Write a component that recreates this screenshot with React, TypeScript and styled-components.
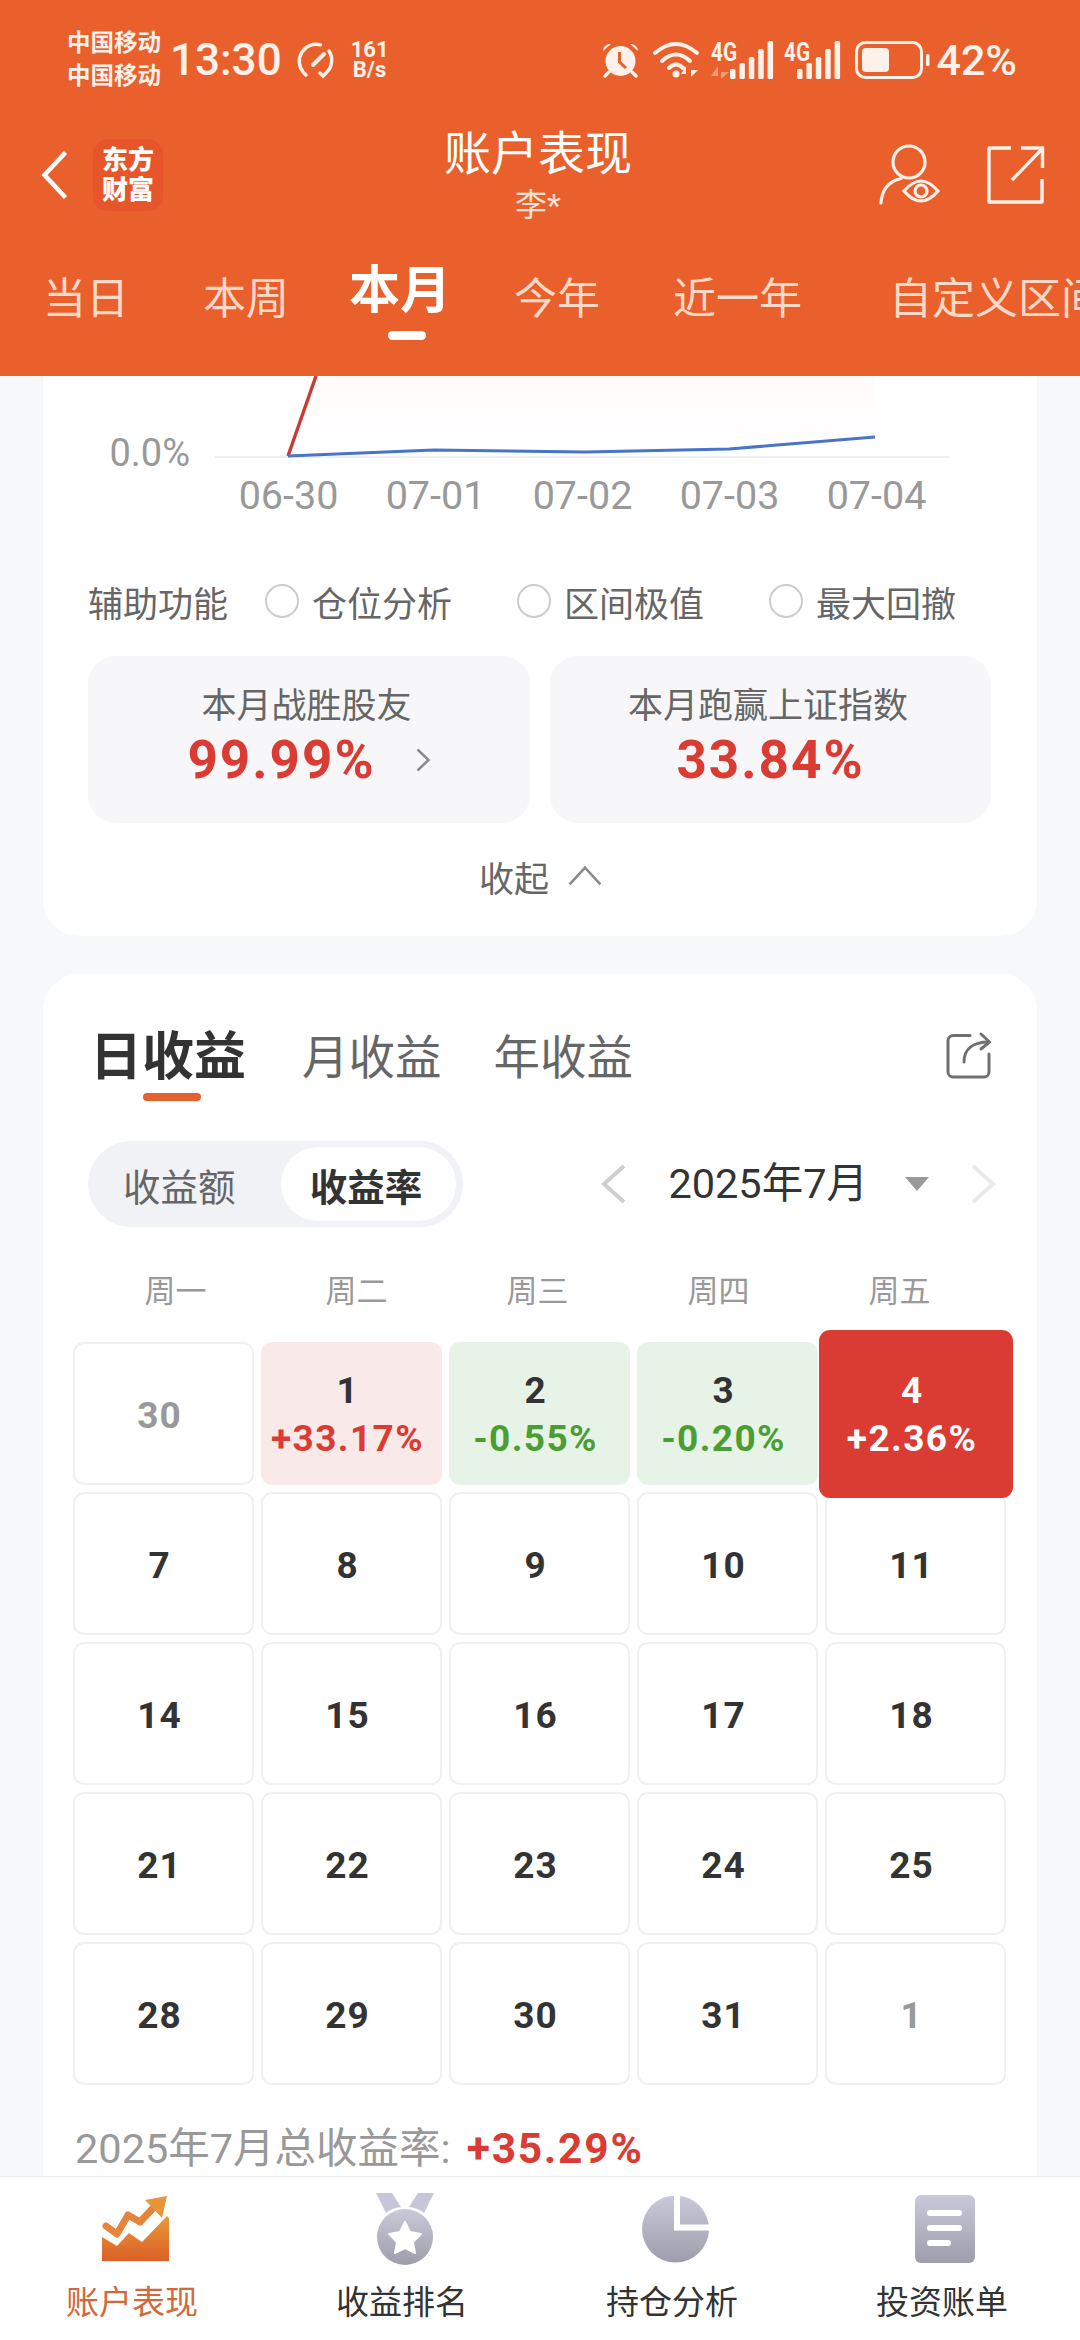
import React from "react";
import styled, { createGlobalStyle } from "styled-components";

const FONT = `Roboto, "Noto Sans CJK SC", "Noto Sans", sans-serif`;
const ORANGE = "#EA602C";
const RED = "#DA3B33";
const GREEN = "#4A9E34";

const Global = createGlobalStyle`
  html, body { margin: 0; padding: 0; background: #F7F8FA; }
  * { box-sizing: border-box; }
  body { font-family: ${FONT}; }
`;

const Screen = styled.div`
  width: 1080px;
  height: 2340px;
  display: flex;
  flex-direction: column;
  overflow: hidden;
  background: #f7f8fa;
`;

const Header = styled.header`
  height: 376px;
  flex: none;
  background: ${ORANGE};
  color: #fff;
`;

const StatusBar = styled.div`
  height: 120px;
  display: flex;
  align-items: center;
  padding: 0 63px 0 67px;
  color: #fdf1ea;
`;

const Carriers = styled.div`
  font-size: 23.5px;
  font-weight: 700;
  line-height: 33px;
  width: 94px;
  white-space: nowrap;
`;

const Clock = styled.div`
  margin: 0 14px 0 9px;
  font-size: 44px;
  font-weight: 500;
  line-height: 50px;
`;

const Speed = styled.div`
  margin-left: 17px;
  font-size: 22px;
  font-weight: 700;
  line-height: 20px;
  text-align: center;
`;

const StatusRight = styled.div`
  margin-left: auto;
  display: flex;
  align-items: center;
  gap: 11px;
`;

const AlarmSlot = styled.div`
  margin-right: 3px;
  display: flex;
`;

const BatterySlot = styled.div`
  margin-left: 4px;
  display: flex;
`;

const Percent = styled.div`
  font-size: 43px;
  font-weight: 500;
  line-height: 50px;
  margin-left: -5px;
`;

const Nav = styled.div`
  height: 110px;
  display: grid;
  grid-template-columns: 1fr auto 1fr;
`;

const NavLeft = styled.div`
  display: flex;
  align-items: center;
  gap: 23px;
  padding-left: 40px;
`;

const Logo = styled.div`
  width: 70px;
  height: 72px;
  border-radius: 15px;
  background: #e7552b;
  display: flex;
  flex-direction: column;
  align-items: center;
  justify-content: center;
  font-size: 26px;
  font-weight: 900;
  line-height: 30px;
`;

const TitleBlock = styled.div`
  display: flex;
  flex-direction: column;
  align-items: center;
  padding: 9px 4px 0 0;
`;

const Title = styled.div`
  font-size: 47px;
  line-height: 50px;
  font-weight: 400;
`;

const SubTitle = styled.div`
  margin-top: 9px;
  font-size: 32px;
  line-height: 34px;
  color: #fde4d8;
`;

const NavRight = styled.div`
  display: flex;
  align-items: center;
  justify-content: flex-end;
  gap: 47px;
  padding-right: 36px;
`;

const PeriodTabs = styled.div`
  display: flex;
  align-items: flex-start;
  height: 146px;
  padding-top: 39px;
  white-space: nowrap;
  overflow: hidden;
`;

const PeriodTab = styled.div<{ $left: number; $active?: boolean }>`
  position: relative;
  flex: none;
  margin-left: ${(p) => p.$left}px;
  margin-top: ${(p) => (p.$active ? -8 : 0)}px;
  font-size: ${(p) => (p.$active ? 51 : 43)}px;
  line-height: 60px;
  font-weight: ${(p) => (p.$active ? 700 : 400)};
  color: ${(p) => (p.$active ? "#fff" : "#fcd9c7")};
  ${(p) =>
    p.$active &&
    `&::after {
      content: "";
      position: absolute;
      left: 39px;
      top: 70px;
      width: 38px;
      height: 9px;
      border-radius: 5px;
      background: #fff;
    }`}
`;

const Main = styled.main`
  flex: 1;
  min-height: 0;
  overflow: hidden;
  padding: 0 43px;
`;

const Card = styled.section`
  background: #fff;
  border-radius: 0 0 36px 36px;
  padding: 0 45px 40px;
`;

const PlotRow = styled.div`
  display: flex;
  align-items: flex-end;
  height: 82px;
`;

const YLabel = styled.div`
  width: 127px;
  flex: none;
  text-align: right;
  padding-right: 25px;
  font-size: 38px;
  line-height: 44px;
  color: #999;
  margin-bottom: -17px;
`;

const XAxis = styled.div`
  display: grid;
  grid-template-columns: repeat(5, 147px);
  margin: 16px 0 0 127px;
`;

const XLabel = styled.div`
  text-align: center;
  font-size: 39.5px;
  line-height: 44px;
  color: #999;
  white-space: nowrap;
`;

const AuxRow = styled.div`
  margin-top: 61px;
  display: flex;
  align-items: center;
  height: 44px;
  font-size: 35px;
  color: #666;
`;

const AuxTitle = styled.div`
  width: 177px;
  flex: none;
`;

const AuxOption = styled.div`
  display: flex;
  align-items: center;
  gap: 13px;
  width: 252px;
  flex: none;
`;

const Radio = styled.span`
  width: 34px;
  height: 34px;
  border-radius: 50%;
  border: 2.5px solid #ccc;
  flex: none;
`;

const Stats = styled.div`
  margin-top: 33px;
  display: grid;
  grid-template-columns: 442px 441px;
  gap: 20px;
`;

const StatBox = styled.div`
  height: 167px;
  border-radius: 28px;
  background: #f7f7fa;
  padding-top: 28px;
  display: flex;
  flex-direction: column;
  align-items: center;
`;

const StatLabel = styled.div`
  font-size: 35px;
  line-height: 46px;
  color: #666;
  padding-right: 5px;
`;

const StatValueRow = styled.div`
  display: flex;
  align-items: center;
  gap: 39px;
`;

const StatValue = styled.div`
  font-size: 53px;
  line-height: 60px;
  font-weight: 700;
  letter-spacing: 2px;
  color: ${RED};
`;

const Collapse = styled.div`
  margin-top: 33px;
  height: 40px;
  display: flex;
  align-items: center;
  justify-content: center;
  gap: 18px;
  padding-left: 2px;
  font-size: 35px;
  color: #666;
`;

const EarningsCard = styled.section`
  margin-top: 38px;
  background: #fff;
  border-radius: 36px 36px 0 0;
  padding: 54px 0 60px;
`;

const EarnTabs = styled.div`
  display: flex;
  align-items: center;
  height: 60px;
  padding: 0 46px 0 47px;
`;

const EarnTab = styled.div<{ $active?: boolean }>`
  position: relative;
  font-size: ${(p) => (p.$active ? 52 : 46.5)}px;
  font-weight: ${(p) => (p.$active ? 700 : 400)};
  line-height: 60px;
  color: ${(p) => (p.$active ? "#333" : "#666")};
  margin-right: ${(p) => (p.$active ? 56 : 52)}px;
  ${(p) =>
    p.$active &&
    `&::after {
      content: "";
      position: absolute;
      left: 53px;
      top: 65px;
      width: 58px;
      height: 8px;
      border-radius: 4px;
      background: #e4622e;
    }`}
`;

const ShareSlot = styled.div`
  margin-left: auto;
  margin-top: -6px;
  display: flex;
`;

const ControlRow = styled.div`
  margin-top: 53px;
  display: flex;
  align-items: center;
  justify-content: space-between;
  padding: 0 40px 0 45px;
`;

const Segment = styled.div`
  width: 375px;
  height: 86px;
  border-radius: 43px;
  background: #f1f2f5;
  padding: 6px 7px 6px 0;
  display: flex;
  align-items: center;
  font-size: 37.5px;
`;

const SegItem = styled.div<{ $active?: boolean }>`
  height: 74px;
  border-radius: 37px;
  display: flex;
  align-items: center;
  flex: none;
  ${(p) =>
    p.$active
      ? `width: 175px; margin-left: auto; padding-right: 5px; justify-content: center; background: #fff; color: #333; font-weight: 700;`
      : `padding-left: 35px; color: #666;`}
`;

const MonthPicker = styled.div`
  display: flex;
  align-items: center;
  font-size: 41.5px;
  line-height: 50px;
  color: #333;
  white-space: nowrap;
`;

const MonthText = styled.div`
  margin: 0 37px 0 40px;
`;

const NextSlot = styled.div`
  margin-left: 40px;
  display: flex;
`;

const Weekdays = styled.div`
  margin-top: 45px;
  display: grid;
  grid-template-columns: repeat(5, 181px);
  padding-left: 42px;
`;

const Weekday = styled.div`
  text-align: center;
  font-size: 31px;
  line-height: 40px;
  color: #999;
`;

const CalGrid = styled.div`
  margin: 30px 0 0 30px;
  width: 933px;
  display: grid;
  grid-template-columns: repeat(5, 181px);
  grid-auto-rows: 143px;
  gap: 7px;
`;

type Tone = "plain" | "muted" | "up" | "down" | "today";

const toneStyle: Record<Tone, string> = {
  plain: "border: 2px solid #f0f0f2; background: #fff; color: #333;",
  muted: "border: 2px solid #f0f0f2; background: #fff; color: #999;",
  up: "background: #fae9e9; color: #333;",
  down: "background: #e7f3e6; color: #333;",
  today: `background: ${RED}; color: #fff; margin: -12px -7px -13px -6px; position: relative; z-index: 1;`,
};

const Cell = styled.div<{ $tone: Tone }>`
  border-radius: 11px;
  display: flex;
  flex-direction: column;
  align-items: center;
  justify-content: center;
  padding: 4px 8px 0 0;
  ${(p) => toneStyle[p.$tone]}
`;

const DayNum = styled.div`
  font-size: 37px;
  font-weight: 700;
  line-height: 46px;
  letter-spacing: 1px;
`;

const DayPct = styled.div<{ $tone: Tone }>`
  font-size: 37px;
  font-weight: 700;
  line-height: 50px;
  letter-spacing: 1.4px;
  white-space: nowrap;
  color: ${(p) => (p.$tone === "up" ? RED : p.$tone === "down" ? GREEN : "#fff")};
`;

const Total = styled.div`
  margin: 39px 0 0 32px;
  font-size: 41.5px;
  line-height: 50px;
  color: #999;
  white-space: nowrap;
`;

const TotalValue = styled.span`
  font-size: 42.5px;
  font-weight: 700;
  color: ${RED};
  margin-left: 16px;
  letter-spacing: 1.8px;
`;

const TabBar = styled.nav`
  height: 164px;
  flex: none;
  background: #fff;
  border-top: 1px solid #ececec;
  padding-top: 16px;
  display: grid;
  grid-template-columns: repeat(4, 270px);
`;

const TabItem = styled.div`
  display: flex;
  flex-direction: column;
  align-items: center;
`;

const TabIcon = styled.div`
  height: 72px;
  display: flex;
  align-items: center;
  justify-content: center;
`;

const TabLabel = styled.div<{ $active?: boolean }>`
  margin-top: 18px;
  padding-right: 6px;
  font-size: 33px;
  line-height: 40px;
  color: ${(p) => (p.$active ? "#D2693A" : "#333")};
`;

const Svg = styled.svg`
  display: block;
  flex: none;
  overflow: visible;
`;

const Gauge = () => (
  <Svg width="38" height="36" viewBox="0 0 38 36" fill="none" stroke="#fdf1ea" strokeWidth="3.4" strokeLinecap="round">
    <path d="M10 33 L7.5 30.5 A17 17 0 0 1 24.5 2.8" />
    <path d="M33 9 A17 17 0 0 1 30.5 30.5 L27 34 L24 31" />
    <path d="M17 23 L28 12" strokeWidth="4" />
  </Svg>
);

const Alarm = () => (
  <Svg width="37" height="36" viewBox="0 0 37 36" fill="none">
    <circle cx="18.5" cy="19" r="15" fill="#fdf1ea" />
    <path d="M1 9 A7 7 0 0 1 9 2 Z M36 9 A7 7 0 0 0 28 2 Z" fill="#fdf1ea" />
    <path d="M7 30 L3 34 M30 30 L34 34" stroke="#fdf1ea" strokeWidth="3.4" strokeLinecap="round" />
    <path d="M17.5 10 V20 L24 26" stroke={ORANGE} strokeWidth="3" fill="none" />
  </Svg>
);

const Wifi = () => (
  <Svg width="47" height="38" viewBox="0 0 47 38" fill="none" stroke="#fdf1ea" strokeWidth="4" strokeLinecap="round">
    <path d="M2 12 Q23 -6 44 12" />
    <path d="M9 20 Q23 7 37 20" />
    <path d="M16 27 Q23 20 30 27" />
    <circle cx="23" cy="33" r="3.5" fill="#fdf1ea" stroke="none" />
    <path d="M33 36 V25 L28 33 H33 Z M38 25 V36 L45 29 H38 Z" fill="#fdf1ea" stroke="none" />
  </Svg>
);

const Signal = ({ width, arrows }: { width: number; arrows?: boolean }) => {
  const x0 = width - 43;
  const heights = [10, 16, 22, 30, 38];
  return (
    <Svg width={width} height="38" viewBox={`0 0 ${width} 38`}>
      <text x="0" y="20" fontFamily="Roboto" fontWeight="700" fontSize="26" fill="#fdf1ea" textLength="26" lengthAdjust="spacingAndGlyphs">
        4G
      </text>
      {arrows && <path d="M7 38 V25 L0 35 H7 Z M10 25 V38 L18 31 H10 Z" fill="#f59a78" />}
      {heights.map((h, i) => (
        <rect key={h} x={x0 + i * 9.4} y={38 - h} width="5.5" height={h} rx="1.5" fill="#fdf1ea" />
      ))}
    </Svg>
  );
};

const Battery = () => (
  <Svg width="75" height="38" viewBox="0 0 75 38" fill="none">
    <rect x="1.5" y="1.5" width="65" height="35" rx="9" stroke="#fdf1ea" strokeWidth="3" />
    <rect x="7" y="7" width="27" height="24" rx="4" fill="#fdf1ea" />
    <rect x="71" y="13" width="3.5" height="12" rx="1.5" fill="#fdf1ea" />
  </Svg>
);

const PersonEye = () => (
  <Svg width="61" height="62" viewBox="0 0 61 62" fill="none" stroke="#fdf1ea" strokeWidth="3.2" strokeLinecap="round">
    <circle cx="30" cy="18" r="16" />
    <path d="M2 59 C3 44 11 37 22 34.5" />
    <path d="M25 47 Q42 27 59 47 Q42 67 25 47 Z" />
    <circle cx="42" cy="47" r="6" />
  </Svg>
);

const ExportIcon = () => (
  <Svg width="57" height="58" viewBox="0 0 57 58" fill="none" stroke="#fdf1ea" strokeWidth="3.4">
    <path d="M24 2 H2 V56 H55 V33" strokeLinejoin="round" />
    <path d="M25 34 L55 3" />
    <path d="M34 2 H55.5 V22" />
  </Svg>
);

const MiniChevron = ({ dir, color, w, h, sw }: { dir: "left" | "right" | "up"; color: string; w: number; h: number; sw: number }) => {
  const pad = sw;
  const d =
    dir === "left"
      ? `M${w - pad} ${pad} L${pad} ${h / 2} L${w - pad} ${h - pad}`
      : dir === "right"
      ? `M${pad} ${pad} L${w - pad} ${h / 2} L${pad} ${h - pad}`
      : `M${pad} ${h - pad} L${w / 2} ${pad} L${w - pad} ${h - pad}`;
  return (
    <Svg width={w} height={h} viewBox={`0 0 ${w} ${h}`} fill="none" stroke={color} strokeWidth={sw}>
      <path d={d} />
    </Svg>
  );
};

const ChartLines = () => (
  <Svg width="734" height="82" viewBox="0 0 734 82" fill="none">
    <defs>
      <linearGradient id="fade" x1="0" y1="0" x2="0" y2="1">
        <stop offset="0" stopColor="#fffbfb" />
        <stop offset="1" stopColor="#ffffff" />
      </linearGradient>
    </defs>
    <path d="M101 0 L73 80 L660 60 V0 Z" fill="url(#fade)" />
    <line x1="0" y1="81" x2="734" y2="81" stroke="#e8ebf3" strokeWidth="1.5" />
    <path d="M73 80 L101 0" stroke="#CB3A30" strokeWidth="3.4" />
    <path d="M73 80 L219 74 L370 76 L514 73 L660 61" stroke="#4A74C9" strokeWidth="3" />
  </Svg>
);

const CardShare = () => (
  <Svg width="45" height="47" viewBox="0 0 45 47" fill="none" stroke="#707070" strokeWidth="3" strokeLinecap="round" strokeLinejoin="round">
    <path d="M24 3.5 H7 a5 5 0 0 0 -5 5 V40 a5 5 0 0 0 5 5 H38 a5 5 0 0 0 5 -5 V22" />
    <path d="M18 30 C18 18 26 10 43 10" />
    <path d="M35 2 L43.5 10 L35 17" />
  </Svg>
);

const ChartTabIcon = () => (
  <Svg width="67" height="66" viewBox="0 0 67 66" fill="none">
    <defs>
      <linearGradient id="ora" x1="0" y1="0" x2="0" y2="1">
        <stop offset="0" stopColor="#E89A3A" />
        <stop offset="1" stopColor="#DC5F27" />
      </linearGradient>
    </defs>
    <path d="M0 65 V41 L15 50 L27 37 L40 46 L65 20 L67 22 V65 Z" fill="url(#ora)" />
    <path d="M4 30 L15 38 L26 19 L38 26 L54 9" stroke="#E5853A" strokeWidth="7" strokeLinejoin="round" strokeLinecap="round" />
    <path d="M43 4 L65 0 L60 22 Z" fill="#E8953A" />
  </Svg>
);

const GreyDefs = ({ id }: { id: string }) => (
  <defs>
    <linearGradient id={id} x1="0" y1="0" x2="0" y2="1">
      <stop offset="0" stopColor="#C9C9DA" />
      <stop offset="1" stopColor="#9D9DAB" />
    </linearGradient>
  </defs>
);

const MedalIcon = () => (
  <Svg width="58" height="72" viewBox="0 0 58 72" fill="none">
    <GreyDefs id="g1" />
    <path d="M0 0 H16 L25 14 Q16 15 10 20 Z M42 0 H58 L48 20 Q42 15 33 14 Z" fill="#C6C6D8" />
    <circle cx="29" cy="44" r="28" fill="url(#g1)" />
    <path d="M29 29 L34 39 L45 41 L37 49 L39 60 L29 55 L19 60 L21 49 L13 41 L24 39 Z" fill="#fff" stroke="#fff" strokeWidth="2" strokeLinejoin="round" />
  </Svg>
);

const PieIcon = () => (
  <Svg width="67" height="68" viewBox="0 0 67 68" fill="none">
    <GreyDefs id="g2" />
    <circle cx="33.5" cy="34" r="33.5" fill="url(#g2)" />
    <path d="M35 0 V32.5 H67" stroke="#fff" strokeWidth="6" />
  </Svg>
);

const DocIcon = () => (
  <Svg width="60" height="68" viewBox="0 0 60 68" fill="none">
    <GreyDefs id="g3" />
    <rect width="60" height="68" rx="6" fill="url(#g3)" />
    <rect x="12" y="15" width="35" height="6" rx="3" fill="#fff" />
    <rect x="12" y="30" width="35" height="6" rx="3" fill="#fff" />
    <rect x="12" y="45" width="24" height="6" rx="3" fill="#fff" />
  </Svg>
);

const periods = [
  { t: "当日", l: 43 },
  { t: "本周", l: 74 },
  { t: "本月", l: 60, a: true },
  { t: "今年", l: 63 },
  { t: "近一年", l: 73 },
  { t: "自定义区间", l: 87 },
];

type Day = { d: number; tone: Tone; pct?: string };
const days: Day[] = [
  { d: 30, tone: "muted" },
  { d: 1, tone: "up", pct: "+33.17%" },
  { d: 2, tone: "down", pct: "-0.55%" },
  { d: 3, tone: "down", pct: "-0.20%" },
  { d: 4, tone: "today", pct: "+2.36%" },
  ...[7, 8, 9, 10, 11, 14, 15, 16, 17, 18, 21, 22, 23, 24, 25, 28, 29, 30, 31].map((d) => ({ d, tone: "plain" as Tone })),
  { d: 1, tone: "muted" },
];

export default function App() {
  return (
    <Screen>
      <Global />
      <Header>
        <StatusBar>
          <Carriers>
            中国移动
            <br />
            中国移动
          </Carriers>
          <Clock>13:30</Clock>
          <Gauge />
          <Speed>
            161
            <br />
            B/s
          </Speed>
          <StatusRight>
            <AlarmSlot>
              <Alarm />
            </AlarmSlot>
            <Wifi />
            <Signal width={62} arrows />
            <Signal width={56} />
            <BatterySlot>
              <Battery />
            </BatterySlot>
            <Percent>42%</Percent>
          </StatusRight>
        </StatusBar>
        <Nav>
          <NavLeft>
            <MiniChevron dir="left" color="#fff" w={30} h={54} sw={4.5} />
            <Logo>
              <div>东方</div>
              <div>财富</div>
            </Logo>
          </NavLeft>
          <TitleBlock>
            <Title>账户表现</Title>
            <SubTitle>李*</SubTitle>
          </TitleBlock>
          <NavRight>
            <PersonEye />
            <ExportIcon />
          </NavRight>
        </Nav>
        <PeriodTabs>
          {periods.map((p) => (
            <PeriodTab key={p.t} $left={p.l} $active={p.a}>
              {p.t}
            </PeriodTab>
          ))}
        </PeriodTabs>
      </Header>
      <Main>
        <Card>
          <PlotRow>
            <YLabel>0.0%</YLabel>
            <ChartLines />
          </PlotRow>
          <XAxis>
            {["06-30", "07-01", "07-02", "07-03", "07-04"].map((d) => (
              <XLabel key={d}>{d}</XLabel>
            ))}
          </XAxis>
          <AuxRow>
            <AuxTitle>辅助功能</AuxTitle>
            {["仓位分析", "区间极值", "最大回撤"].map((t) => (
              <AuxOption key={t}>
                <Radio />
                {t}
              </AuxOption>
            ))}
          </AuxRow>
          <Stats>
            <StatBox>
              <StatLabel>本月战胜股友</StatLabel>
              <StatValueRow>
                <StatValue>99.99%</StatValue>
                <MiniChevron dir="right" color="#8a8a8a" w={16} h={26} sw={2.5} />
              </StatValueRow>
            </StatBox>
            <StatBox>
              <StatLabel>本月跑赢上证指数</StatLabel>
              <StatValueRow>
                <StatValue>33.84%</StatValue>
              </StatValueRow>
            </StatBox>
          </Stats>
          <Collapse>
            收起
            <MiniChevron dir="up" color="#8a8a8a" w={36} h={22} sw={2.6} />
          </Collapse>
        </Card>
        <EarningsCard>
          <EarnTabs>
            <EarnTab $active>日收益</EarnTab>
            <EarnTab>月收益</EarnTab>
            <EarnTab>年收益</EarnTab>
            <ShareSlot>
              <CardShare />
            </ShareSlot>
          </EarnTabs>
          <ControlRow>
            <Segment>
              <SegItem>收益额</SegItem>
              <SegItem $active>收益率</SegItem>
            </Segment>
            <MonthPicker>
              <MiniChevron dir="left" color="#cfcfcf" w={28} h={44} sw={4} />
              <MonthText>2025年7月</MonthText>
              <Svg width="24" height="14" viewBox="0 0 24 14">
                <path d="M0 0 H24 L12 14 Z" fill="#999" />
              </Svg>
              <NextSlot>
                <MiniChevron dir="right" color="#e9e9e9" w={28} h={44} sw={4} />
              </NextSlot>
            </MonthPicker>
          </ControlRow>
          <Weekdays>
            {["周一", "周二", "周三", "周四", "周五"].map((w) => (
              <Weekday key={w}>{w}</Weekday>
            ))}
          </Weekdays>
          <CalGrid>
            {days.map((c, i) => (
              <Cell key={i} $tone={c.tone}>
                <DayNum>{c.d}</DayNum>
                {c.pct && <DayPct $tone={c.tone}>{c.pct}</DayPct>}
              </Cell>
            ))}
          </CalGrid>
          <Total>
            2025年7月总收益率:<TotalValue>+35.29%</TotalValue>
          </Total>
        </EarningsCard>
      </Main>
      <TabBar>
        <TabItem>
          <TabIcon><ChartTabIcon /></TabIcon>
          <TabLabel $active>账户表现</TabLabel>
        </TabItem>
        <TabItem>
          <TabIcon><MedalIcon /></TabIcon>
          <TabLabel>收益排名</TabLabel>
        </TabItem>
        <TabItem>
          <TabIcon><PieIcon /></TabIcon>
          <TabLabel>持仓分析</TabLabel>
        </TabItem>
        <TabItem>
          <TabIcon><DocIcon /></TabIcon>
          <TabLabel>投资账单</TabLabel>
        </TabItem>
      </TabBar>
    </Screen>
  );
}
